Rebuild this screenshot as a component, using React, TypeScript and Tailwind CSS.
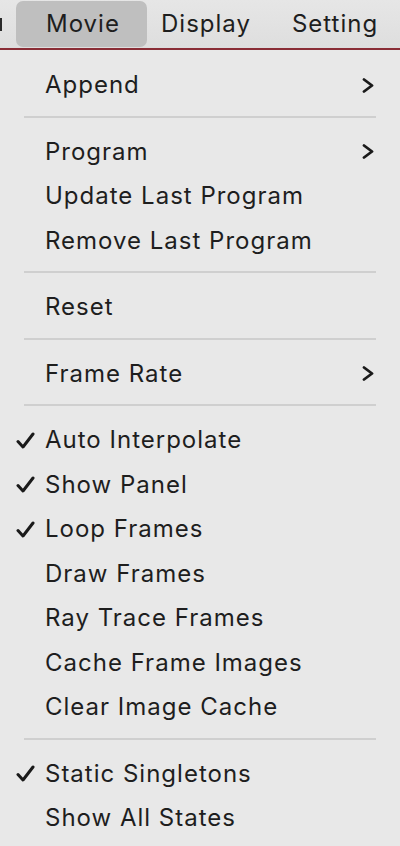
import React from 'react'

type Item = { label: string; checked?: boolean; submenu?: boolean } | 'sep'

const items: Item[] = [
  { label: 'Append', submenu: true },
  'sep',
  { label: 'Program', submenu: true },
  { label: 'Update Last Program' },
  { label: 'Remove Last Program' },
  'sep',
  { label: 'Reset' },
  'sep',
  { label: 'Frame Rate', submenu: true },
  'sep',
  { label: 'Auto Interpolate', checked: true },
  { label: 'Show Panel', checked: true },
  { label: 'Loop Frames', checked: true },
  { label: 'Draw Frames' },
  { label: 'Ray Trace Frames' },
  { label: 'Cache Frame Images' },
  { label: 'Clear Image Cache' },
  'sep',
  { label: 'Static Singletons', checked: true },
  { label: 'Show All States' },
]

const Check = () => (
  <svg width="19" height="17" viewBox="0 0 19 17" fill="none">
    <path d="M2 9.5 L7 15 L17 2" stroke="#1a1a1a" strokeWidth="3" strokeLinecap="round" strokeLinejoin="round" />
  </svg>
)

const Chevron = () => (
  <svg width="12" height="15" viewBox="0 0 12 15" fill="none">
    <path d="M2 1.5 L10 7.5 L2 13.5" stroke="#1a1a1a" strokeWidth="2.8" strokeLinecap="round" strokeLinejoin="round" />
  </svg>
)

const App = () => {
  return (
    <div className="w-[400px] h-[846px] overflow-hidden bg-[#e8e8e8] font-['Inter','Liberation_Sans',sans-serif] text-[#1e1e1e] tracking-[1px]">
      <div className="h-[48px] flex items-center bg-gradient-to-b from-[#e6e6e6] to-[#dedede] text-[24px]">
        <div className="w-[2px] h-[13px] bg-[#2a2a2a] mt-[1px]" />
        <div className="ml-[14px] h-[46px] w-[131px] rounded-[7px] bg-[#bfbfbf] flex items-center pl-[30px]">Movie</div>
        <div className="ml-[14px]">Display</div>
        <div className="ml-[41px]">Setting</div>
      </div>
      <div className="h-[2px] bg-[#8a2d36]" />
      <div className="pt-[13px]">
        {items.map((it, i) =>
          it === 'sep' ? (
            <div key={i} className="h-[22px] px-[24px] pt-[8px]">
              <div className="h-[2px] w-full bg-[#cfcfcf]" />
            </div>
          ) : (
            <div key={i} className="h-[44.5px] flex items-center text-[24px]">
              <div className="w-[45px] flex justify-end pr-[10px]">{it.checked && <Check />}</div>
              <div className="flex-1">{it.label}</div>
              {it.submenu && (
                <div className="pr-[26px] flex items-center">
                  <Chevron />
                </div>
              )}
            </div>
          )
        )}
      </div>
    </div>
  )
}

export default App
